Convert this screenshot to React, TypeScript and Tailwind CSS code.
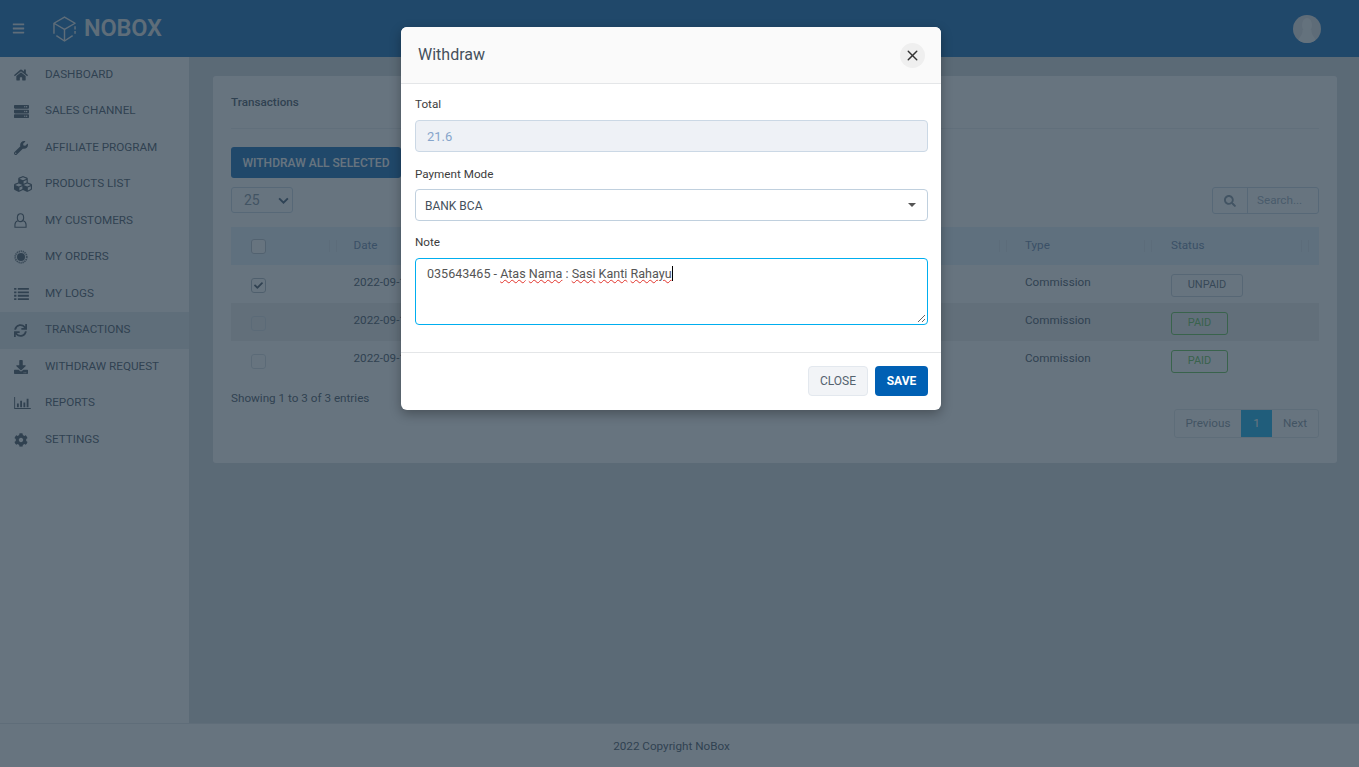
import { FaBars, FaCheck, FaCog, FaCubes, FaDownload, FaHome, FaSearch, FaServer, FaSync, FaWrench } from "react-icons/fa";
import { LuX } from "react-icons/lu";
import type { ReactNode } from "react";

const UserIcon = () => (
  <svg viewBox="0 0 14 16" className="h-[15px] w-[13px]" fill="none" stroke="currentColor" strokeWidth="1.2">
    <ellipse cx="7" cy="5" rx="3.4" ry="4.2" />
    <path d="M4 8.2C2 9 1 10.5 1 12.5v2.8h12v-2.8c0-2-1-3.500-3-4.300" />
  </svg>
);

const OrdersIcon = () => (
  <svg viewBox="0 0 16 16" className="h-[14px] w-[14px]" fill="currentColor">
    <circle cx="8" cy="8" r="4.6" />
    <circle cx="8" cy="8" r="6.6" fill="none" stroke="currentColor" strokeWidth="2" strokeDasharray="1.5 0.8" opacity="0.8" />
  </svg>
);

const ListIcon = () => (
  <svg viewBox="0 0 16 13" className="h-[12px] w-[15px]" fill="currentColor">
    <path d="M0 0h2.500v2H0zM4 0h12v2H4zM0 3.700h2.500v2H0zM4 3.700h12v2H4zM0 7.400h2.500v2H0zM4 7.400h12v2H4zM0 11h2.500v2H0zM4 11h12v2H4z" />
  </svg>
);

const ChartIcon = () => (
  <svg viewBox="0 0 18 13" className="h-[12px] w-[17px]" fill="currentColor">
    <path d="M0 0h1v12h17v1H0z" />
    <path d="M3 7h2v4H3zM6.500 4h2v7h-2zM10 6h2v5h-2zM13.500 2h2v9h-2z" />
  </svg>
);

const LogoCube = () => (
  <svg viewBox="0 0 24 27" className="h-[26px] w-[23px] text-[#dfe4e8]" fill="none" stroke="currentColor" strokeWidth="1.500" strokeLinejoin="round">
    <path d="M1 18.500V7.500L12 1l11 6.500L12 14 1 7.500" />
    <path d="M12 14v12" />
    <path d="M3.500 20.500L12 26l8.500-5.500" />
    <path d="M23 10.500v8" strokeDasharray="3.500 1.500" />
  </svg>
);

const menu: { label: string; icon: ReactNode; active?: boolean }[] = [
  { label: "Dashboard", icon: <FaHome size={14} /> },
  { label: "Sales Channel", icon: <FaServer size={15} /> },
  { label: "Affiliate Program", icon: <FaWrench size={14} /> },
  { label: "Products List", icon: <FaCubes size={18} /> },
  { label: "My Customers", icon: <UserIcon /> },
  { label: "My Orders", icon: <OrdersIcon /> },
  { label: "My Logs", icon: <ListIcon /> },
  { label: "Transactions", icon: <FaSync size={13} />, active: true },
  { label: "Withdraw Request", icon: <FaDownload size={14} /> },
  { label: "Reports", icon: <ChartIcon /> },
  { label: "Settings", icon: <FaCog size={14} /> },
];

const rows = [
  { checked: true, status: "UNPAID" },
  { checked: false, status: "PAID" },
  { checked: false, status: "PAID" },
];

const SortMark = ({ className }: { className: string }) => (
  <span className={`ml-auto h-3 w-2 border-x border-[#d6e3ee] ${className}`} />
);

const spellcheck = "underline decoration-[#e2332b] decoration-wavy decoration-1 underline-offset-1";

export default function App() {
  return (
    <div className="relative flex h-[767px] flex-col overflow-hidden bg-[#d3d9dd] font-['Roboto',sans-serif] text-[11.7px] text-[#3a4a5a]">
      <header className="flex h-[57px] shrink-0 items-center justify-between bg-[#0060b4] pl-3 pr-[38px] text-white">
        <div className="flex items-center">
          <FaBars size={13} className="text-[#e0e5ea]" />
          <span className="ml-[28px] flex"><LogoCube /></span>
          <span className="ml-[8px] text-[23.5px] font-semibold tracking-[-0.2px] text-[#dfe4e8]">NOBOX</span>
        </div>
        <svg viewBox="0 0 28 28" className="h-7 w-7 rounded-full bg-[#dde1e4]">
          <ellipse cx="14" cy="10" rx="5" ry="7" fill="#f5f6f7" />
          <path d="M9.500 15C10 21 5 22 5 28H23C23 22 18 21 18.500 15Z" fill="#f5f6f7" />
        </svg>
      </header>

      <div className="flex min-h-0 flex-1">
        <aside className="w-[189px] shrink-0 bg-white">
          <div className="-mt-[0.5px]">
            {menu.map((item) => (
              <div
                key={item.label}
                className={`flex h-[36.5px] items-center uppercase ${item.active ? "bg-[#e3e8ec]" : ""}`}
              >
                <span className="flex w-[45px] justify-start pl-[14px] text-[#3b4856]">{item.icon}</span>
                <span>{item.label}</span>
              </div>
            ))}
          </div>
        </aside>

        <main className="min-w-0 flex-1 pl-[24px] pr-[22px] pt-[19px]">
          <section className="h-[387px] rounded-[3px] bg-white px-[18px]">
            <div className="flex h-[53px] items-center border-b border-[#e8ecef] pt-[2px] font-medium">Transactions</div>
            <button className="mt-[18px] block h-[31px] w-[170px] rounded-[3px] bg-[#0060b4] text-[12px] font-medium text-white">
              WITHDRAW ALL SELECTED
            </button>

            <div className="mt-[9px] flex items-start justify-between">
              <div className="flex h-[26px] w-[62px] items-center justify-between rounded-[3px] border border-[#c5d4e3] pl-3 pr-[3px] text-[14px] text-[#7b8b9b]">
                25
                <svg viewBox="0 0 12 8" className="h-[7px] w-[11px] text-[#35506b]" fill="none" stroke="currentColor" strokeWidth="2.2">
                  <path d="M1 1.500l5 5 5-5" />
                </svg>
              </div>
              <div className="flex h-[27px] w-[107px] rounded-[3px] border border-[#c5d4e3]">
                <span className="flex w-[35px] items-center justify-center border-r border-[#c5d4e3] text-[#7b8b9b]">
                  <FaSearch size={12} />
                </span>
                <span className="flex items-center pl-[9px] text-[#94a6b8]">Search...</span>
              </div>
            </div>

            <div className="mt-[13px] flex h-[38px] items-center bg-[#e3eff9] text-[#5f7fa8]">
              <div className="flex w-[122.5px] items-center pl-[20px]">
                <span className="h-[15px] w-[15px] rounded-[3px] border border-[#b5bfc9] bg-white" />
                <SortMark className="mr-[17px]" />
              </div>
              <div className="flex w-[671.5px] items-center">Date<SortMark className="mr-[18px]" /></div>
              <div className="flex w-[146px] items-center">Type<SortMark className="mr-[19px]" /></div>
              <div className="flex flex-1 items-center">Status<SortMark className="mr-[10px]" /></div>
            </div>

            {rows.map((row, i) => (
              <div key={i} className={`flex h-[38px] items-center pt-[2px] ${i === 1 ? "bg-[#ebecee]" : ""}`}>
                <div className="w-[122.5px] pl-[20px]">
                  <span className={`flex h-[15px] w-[15px] items-center justify-center rounded-[3px] border ${row.checked ? "border-[#a9b4bf]" : "border-[#d5dce3]"}`}>
                    {row.checked && <FaCheck size={9} className="text-[#3a4a5a]" />}
                  </span>
                </div>
                <div className="w-[671.5px] pb-[4px]">2022-09-15</div>
                <div className="w-[146px] pb-[4px]">Commission</div>
                <div
                  className={`flex h-[23px] items-center justify-center rounded-[3px] border text-[11px] ${
                    row.status === "PAID" ? "w-[57px] border-[#5cc04a] text-[#5cc04a]" : "w-[72px] border-[#c5d0da] text-[#55636f]"
                  }`}
                >
                  {row.status}
                </div>
              </div>
            ))}

            <div className="mt-[11px] flex items-start justify-between">
              <span>Showing 1 to 3 of 3 entries</span>
              <div className="mt-[19px] flex h-[29px] items-center overflow-hidden rounded-[3px] border border-[#dfe4e8] text-[#7b8b9b]">
                <span className="w-[66px] text-center">Previous</span>
                <span className="flex h-full w-[31px] items-center justify-center bg-[#00aeef] text-white">1</span>
                <span className="w-[46px] text-center">Next</span>
              </div>
            </div>
          </section>
        </main>
      </div>

      <footer className="flex h-[44px] shrink-0 items-center justify-center border-t border-[#e3e7ea] bg-white pr-4 pt-[2px]">
        2022 Copyright NoBox
      </footer>

      {/* backdrop + modal lie over the page */}
      <div className="absolute inset-0 bg-[rgba(45,62,78,0.72)]" />
      <div className="absolute left-[401px] top-[27px] w-[540px] overflow-hidden rounded-[6px] bg-white shadow-[0_4px_12px_rgba(0,0,0,0.3)]">
        <div className="flex h-[57px] items-center justify-between border-b border-[#e4e6e8] bg-[#fafafa] pl-[17px] pr-[16px]">
          <h2 className="text-[16px] text-[#45505c]">Withdraw</h2>
          <span className="flex h-[25px] w-[25px] items-center justify-center rounded-full bg-[#efefef] text-[#333]">
            <LuX size={17} strokeWidth={2} />
          </span>
        </div>

        <div className="flex flex-col pl-[14px] pr-[13px] pt-[12px]">
          <label className="leading-[16px] text-[#3d3d3d]">Total</label>
          <div className="mt-[8px] flex h-[32px] items-center rounded-[4px] border border-[#cbd8e5] bg-[#eef1f6] pl-[11px] pt-[2px] text-[13px] text-[#86a5cb]">
            21.6
          </div>
          <label className="mt-[14px] leading-[16px] text-[#3d3d3d]">Payment Mode</label>
          <div className="mt-[7px] flex h-[32px] items-center justify-between rounded-[4px] border border-[#c0d0de] pl-[9px] pr-[11px] text-[12px] text-[#45505c]">
            <span className="pt-[2px]">BANK BCA</span>
            <span className="h-0 w-0 border-x-[4px] border-t-[4px] border-x-transparent border-t-[#555]" />
          </div>
          <label className="mt-[13px] leading-[16px] text-[#3d3d3d]">Note</label>
          <div className="relative mt-[8px] h-[67px] rounded-[4px] border border-[#00aeef] pl-[11px] pt-[7px] text-[12.55px] leading-[15px] text-[#555]">
            <span>035643465 - </span>
            <span className={spellcheck}>Atas</span>
            <span> </span>
            <span className={spellcheck}>Nama</span>
            <span> : </span>
            <span className={spellcheck}>Sasi</span>
            <span> </span>
            <span className={spellcheck}>Kanti</span>
            <span> </span>
            <span className={spellcheck}>Rahayu</span>
            <span className="inline-block h-[15px] w-px bg-black align-text-bottom" />
            <svg viewBox="0 0 9 9" className="absolute bottom-[1px] right-[1px] h-[9px] w-[9px] text-[#666]" stroke="currentColor" fill="none">
              <path d="M1 8L8 1M5 8L8 5" />
            </svg>
          </div>
        </div>

        <div className="mt-[27px] flex h-[58px] items-center justify-end gap-[7px] border-t border-[#e4e6e8] px-[13px] pb-[2px]">
          <button className="h-[30px] w-[60px] rounded-[4px] border border-[#e3e8ee] bg-[#f2f4f7] text-[12px] text-[#55636f]">CLOSE</button>
          <button className="h-[30px] w-[53px] rounded-[4px] bg-[#0060b4] text-[12px] font-bold text-white">SAVE</button>
        </div>
      </div>
    </div>
  );
}
